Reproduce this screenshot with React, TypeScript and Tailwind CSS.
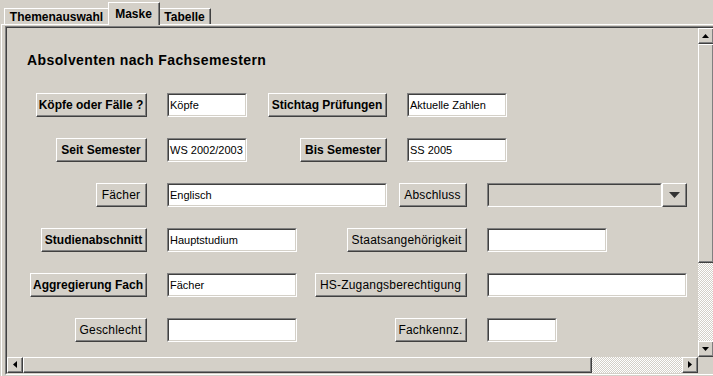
import React from 'react';

type Kids = { children?: React.ReactNode };

// raised Windows-classic bevel (buttons, scroll buttons, thumbs)
const Raised = ({ className = '', children }: Kids & { className?: string }) => (
  <div
    className={`border-t border-l border-b border-r border-t-white border-l-white border-b-[#404040] border-r-[#404040] ${className}`}
  >
    <div className="h-full w-full border-b border-r border-b-[#808080] border-r-[#808080] flex items-center justify-center">
      {children}
    </div>
  </div>
);

const Btn = ({ w, bold, children }: Kids & { w: string; bold?: boolean }) => (
  <Raised className={`${w} h-[24px] shrink-0`}>
    <span
      className={
        bold
          ? 'text-[12px] font-bold leading-[14px] text-black'
          : 'text-[12px] leading-[14px] tracking-[0.2px] text-black'
      }
    >
      {children}
    </span>
  </Raised>
);

const Field = ({ w, value, disabled }: { w: string; value?: string; disabled?: boolean }) => (
  <div
    className={`${w} h-[24px] shrink-0 border-t border-l border-b border-r border-t-[#808080] border-l-[#808080] border-b-white border-r-white`}
  >
    <div
      className={`h-full w-full border-t border-l border-b border-r border-t-[#404040] border-l-[#404040] border-b-[#d4d0c8] border-r-[#d4d0c8] flex items-center pl-[1px] text-[11px] text-black ${
        disabled ? 'bg-[#d4d0c8]' : 'bg-white'
      }`}
    >
      {value}
    </div>
  </div>
);

const Arrow = ({ dir }: { dir: 'up' | 'down' | 'left' | 'right' }) => {
  const pts = {
    up: '3.5,0 7,4 0,4',
    down: '0,0 7,0 3.5,4',
    left: '4,0 4,7 0,3.5',
    right: '0,0 4,3.5 0,7',
  }[dir];
  const vertical = dir === 'up' || dir === 'down';
  return (
    <svg width={vertical ? 7 : 4} height={vertical ? 4 : 7} viewBox={vertical ? '0 0 7 4' : '0 0 4 7'}>
      <polygon points={pts} fill="#000" />
    </svg>
  );
};

const checker =
  'bg-[repeating-conic-gradient(#ffffff_0_25%,#d4d0c8_0_50%)] bg-[length:2px_2px]';

const Row = ({ children }: Kids) => <div className="flex items-center h-[24px]">{children}</div>;

const Left = ({ children }: Kids) => (
  <div className="w-[140px] shrink-0 flex justify-end mr-[20px]">{children}</div>
);

export default function App() {
  return (
    <div className="w-[713px] h-[376px] overflow-hidden bg-[#d4d0c8] flex flex-col font-['Liberation_Sans',Arial,sans-serif] select-none">
      {/* tabs */}
      <div className="h-[24px] shrink-0 flex items-end pl-[4px]">
        <div className="w-[104px] h-[16px] border-t border-l border-t-white border-l-white flex items-center justify-center">
          <span className="text-[12px] font-bold text-black leading-[14px] pt-[1px]">Themenauswahl</span>
        </div>
        <div className="relative z-10 w-[52px] h-[23px] -mb-[1px] bg-[#d4d0c8] border-t border-l border-r border-t-white border-l-white border-r-[#404040]">
          <div className="h-full border-r border-r-[#808080] flex justify-center pt-[4px]">
            <span className="text-[12px] font-bold text-black leading-[14px]">Maske</span>
          </div>
        </div>
        <div className="w-[51px] h-[16px] border-t border-r border-t-white border-r-[#404040]">
          <div className="h-full border-r border-r-[#808080] flex items-center justify-center">
            <span className="text-[12px] font-bold text-black leading-[14px] pt-[1px]">Tabelle</span>
          </div>
        </div>
      </div>

      {/* panel */}
      <div className="flex-1 ml-[1px] border-t border-l border-t-white border-l-white pl-[3px] pt-[1px]">
        <div className="w-[712px] h-[349px] border-t border-l border-b border-r border-t-[#808080] border-l-[#808080] border-b-white border-r-white">
          <div className="h-full w-full border-t border-l border-b border-r border-t-[#404040] border-l-[#404040] border-b-[#d4d0c8] border-r-[#d4d0c8] flex flex-col">
            <div className="flex h-[329px]">
              {/* viewport */}
              <div className="w-[691px] shrink-0 flex flex-col">
                <div className="mt-[24px] pl-[20px] h-[16px] text-[14px] leading-[16px] font-bold tracking-[0.4px] text-black">
                  Absolventen nach Fachsemestern
                </div>
                <div className="mt-[25px] flex flex-col gap-[21px]">
                  <Row>
                    <Left><Btn w="w-[111px]" bold>Köpfe oder Fälle ?</Btn></Left>
                    <div className="w-[220px] flex justify-between mr-[20px]">
                      <Field w="w-[80px]" value="Köpfe" />
                      <Btn w="w-[119px]" bold>Stichtag Prüfungen</Btn>
                    </div>
                    <Field w="w-[100px]" value="Aktuelle Zahlen" />
                  </Row>
                  <Row>
                    <Left><Btn w="w-[91px]" bold>Seit Semester</Btn></Left>
                    <div className="w-[220px] flex justify-between mr-[20px]">
                      <Field w="w-[80px]" value="WS 2002/2003" />
                      <Btn w="w-[87px]" bold>Bis Semester</Btn>
                    </div>
                    <Field w="w-[100px]" value="SS 2005" />
                  </Row>
                  <Row>
                    <Left><Btn w="w-[51px]">Fächer</Btn></Left>
                    <div className="w-[300px] flex justify-between mr-[20px]">
                      <Field w="w-[220px]" value="Englisch" />
                      <Btn w="w-[68px]">Abschluss</Btn>
                    </div>
                    <div className="flex">
                      <Field w="w-[175px]" disabled />
                      <Raised className="w-[25px] h-[24px]">
                        <svg width="11" height="6" viewBox="0 0 11 6">
                          <polygon points="0,0 11,0 5.5,6" fill="#333" />
                        </svg>
                      </Raised>
                    </div>
                  </Row>
                  <Row>
                    <Left><Btn w="w-[106px]" bold>Studienabschnitt</Btn></Left>
                    <div className="w-[300px] flex justify-between mr-[20px]">
                      <Field w="w-[130px]" value="Hauptstudium" />
                      <Btn w="w-[120px]">Staatsangehörigkeit</Btn>
                    </div>
                    <Field w="w-[120px]" />
                  </Row>
                  <Row>
                    <Left><Btn w="w-[117px]" bold>Aggregierung Fach</Btn></Left>
                    <div className="w-[300px] flex justify-between mr-[20px]">
                      <Field w="w-[130px]" value="Fächer" />
                      <Btn w="w-[152px]">HS-Zugangsberechtigung</Btn>
                    </div>
                    <Field w="w-[200px]" />
                  </Row>
                  <Row>
                    <Left><Btn w="w-[72px]">Geschlecht</Btn></Left>
                    <div className="w-[300px] flex justify-between mr-[20px]">
                      <Field w="w-[130px]" />
                      <Btn w="w-[72px]">Fachkennz.</Btn>
                    </div>
                    <Field w="w-[70px]" />
                  </Row>
                </div>
              </div>
              {/* vertical scrollbar */}
              <div className="w-[16px] shrink-0 flex flex-col">
                <Raised className="h-[16px] shrink-0"><Arrow dir="up" /></Raised>
                <Raised className="h-[219px] shrink-0" />
                <div className={`h-[78px] shrink-0 ${checker}`} />
                <Raised className="h-[16px] shrink-0"><Arrow dir="down" /></Raised>
              </div>
            </div>
            {/* horizontal scrollbar */}
            <div className="flex h-[16px]">
              <Raised className="w-[16px] h-[16px] shrink-0"><Arrow dir="left" /></Raised>
              <Raised className="w-[569px] h-[16px] shrink-0" />
              <div className={`w-[90px] h-[16px] shrink-0 ${checker}`} />
              <Raised className="w-[16px] h-[16px] shrink-0"><Arrow dir="right" /></Raised>
              <div className="w-[16px] h-[16px] shrink-0 bg-[#d4d0c8]" />
            </div>
          </div>
        </div>
      </div>
    </div>
  );
}
